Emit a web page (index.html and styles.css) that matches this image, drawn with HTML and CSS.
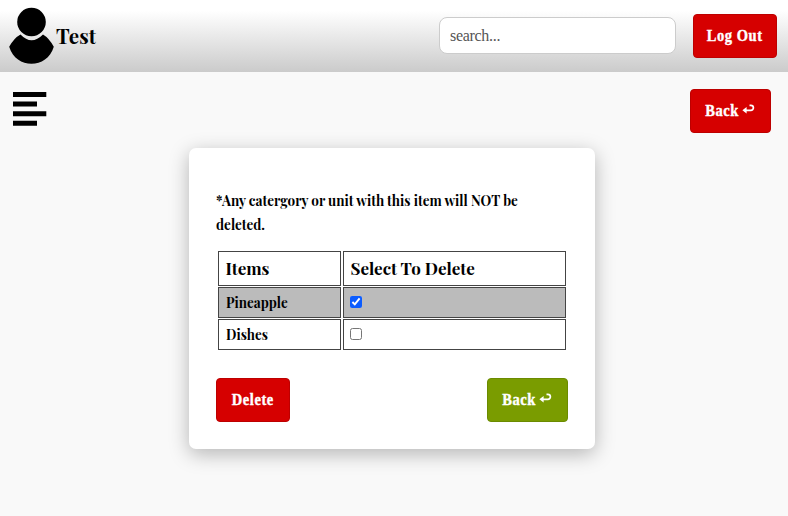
FILE: index.html
```html
<!DOCTYPE html>
<html lang="en">
<head>
<meta charset="utf-8">
<title>Delete items</title>
<link rel="stylesheet" href="styles.css">
</head>
<body>
<header class="topbar">
  <div class="user">
    <svg class="avatar" width="46" height="58" viewBox="0 0 46 58"><circle cx="22.5" cy="15" r="14.3"/><path d="M11.500 27.500 Q22.500 39 34 27.500 Q40 31 44.800 39.800 C38 62.500 7 62.500 0.200 39.800 Q5 31 11.500 27.500Z"/></svg>
    <span class="name">Test</span>
  </div>
  <input class="search" type="text" placeholder="search...">
  <button class="btn logout"><span>Log Out</span></button>
</header>
<nav class="toolbar">
  <svg class="menu" width="34" height="34" viewBox="0 0 34 34"><path d="M0 0h33.300v5H0zM0 9.500h24v5H0zM0 19.300h33.300v5H0zM0 28.700h24v5H0z"/></svg>
  <button class="btn back"><span>Back</span><svg class="arrow" width="13" height="11" viewBox="0 0 13 11"><path d="M7.500 1.300h1.400a2.500 2.500 0 0 1 0 5H2.500"/><path class="head" d="M0.400 6.300 4.600 3v6.600z"/></svg></button>
</nav>
<main class="card">
  <p class="note">*Any catergory or unit with this item will NOT be<br>deleted.</p>
  <table>
    <tr class="head-row"><th class="col-item">Items</th><th>Select To Delete</th></tr>
    <tr class="picked"><td><span class="item">Pineapple</span></td><td><input type="checkbox" checked></td></tr>
    <tr><td><span class="item">Dishes</span></td><td><input type="checkbox"></td></tr>
  </table>
  <div class="actions">
    <button class="btn delete"><span>Delete</span></button>
    <button class="btn back green"><span>Back</span><svg class="arrow" width="13" height="11" viewBox="0 0 13 11"><path d="M7.500 1.300h1.400a2.500 2.500 0 0 1 0 5H2.500"/><path class="head" d="M0.400 6.300 4.600 3v6.600z"/></svg></button>
  </div>
</main>
</body>
</html>
```
FILE: styles.css
```css
* { box-sizing: border-box; }
body {
  margin: 0;
  height: 516px;
  overflow: hidden;
  background: #f9f9f9;
  color: #000;
  font-family: "Playfair Display", "Liberation Serif", serif;
  font-weight: 700;
}
.topbar {
  display: flex;
  align-items: center;
  height: 72px;
  padding: 0 11px 0 9px;
  background: linear-gradient(#fff 15%, #cbcbcb);
}
.user { display: flex; align-items: center; margin-right: auto; }
.name { font-size: 20.5px; line-height: 28px; margin-left: 1px; }
.search {
  width: 237px;
  height: 37px;
  margin: 0 17px 1px 0;
  padding: 0 10px;
  border: 1px solid #ccc;
  border-radius: 8px;
  background: #fff;
  font: 400 16px "Liberation Serif", serif;
  letter-spacing: -.3px;
}
.search::placeholder { color: #555; }
.btn {
  display: flex;
  align-items: center;
  justify-content: center;
  height: 44px;
  padding: 0;
  border: 1px solid #bd0000;
  border-radius: 4px;
  background: #d60000;
  color: #fff;
  font: 700 16.5px "Liberation Serif", serif;
  letter-spacing: .6px;
  -webkit-text-stroke: .4px #fff;
}
.btn span { transform: scaleX(.88); }
.logout { width: 84px; margin-bottom: 1px; }
.toolbar {
  display: flex;
  justify-content: space-between;
  height: 76px;
  padding: 17px 17px 0 13px;
}
.menu { margin-top: 3px; }
.back { width: 81px; gap: 1px; }
.back span { margin-left: -3px; }
.arrow { fill: none; stroke: #fff; stroke-width: 1.7; margin-top: -3px; }
.arrow .head { fill: #fff; stroke: none; }
.card {
  width: 406px;
  height: 301px;
  margin-left: 189px;
  padding: 40px 27px 0;
  border-radius: 7px;
  background: #fff;
  box-shadow: 0 5px 20px rgba(0, 0, 0, .28);
}
.note { margin: 0 0 14px; font-size: 14.5px; line-height: 24px; white-space: nowrap; transform: translateY(-.5px) scaleX(.932); transform-origin: left; }
table { width: 352px; margin-bottom: 27px; border-spacing: 2px 1px; table-layout: fixed; }
th, td { padding: 0 6.5px 1px; border: 1px solid #444; text-align: left; line-height: 20px; }
td { font-size: 14.5px; height: 31px; }
th { height: 35px; font-size: 17px; }
.item { display: inline-block; transform: scaleX(.925); transform-origin: left; }
.col-item { width: 123px; }
.picked td { background: #bbb; }
td input { display: block; width: 12px; height: 12px; margin: 0 0 0 -.5px; accent-color: #0b5cff; }
.actions { display: flex; justify-content: space-between; }
.delete { width: 74px; }
.green { background: #7a9c00; border-color: #6b8b00; }
```
